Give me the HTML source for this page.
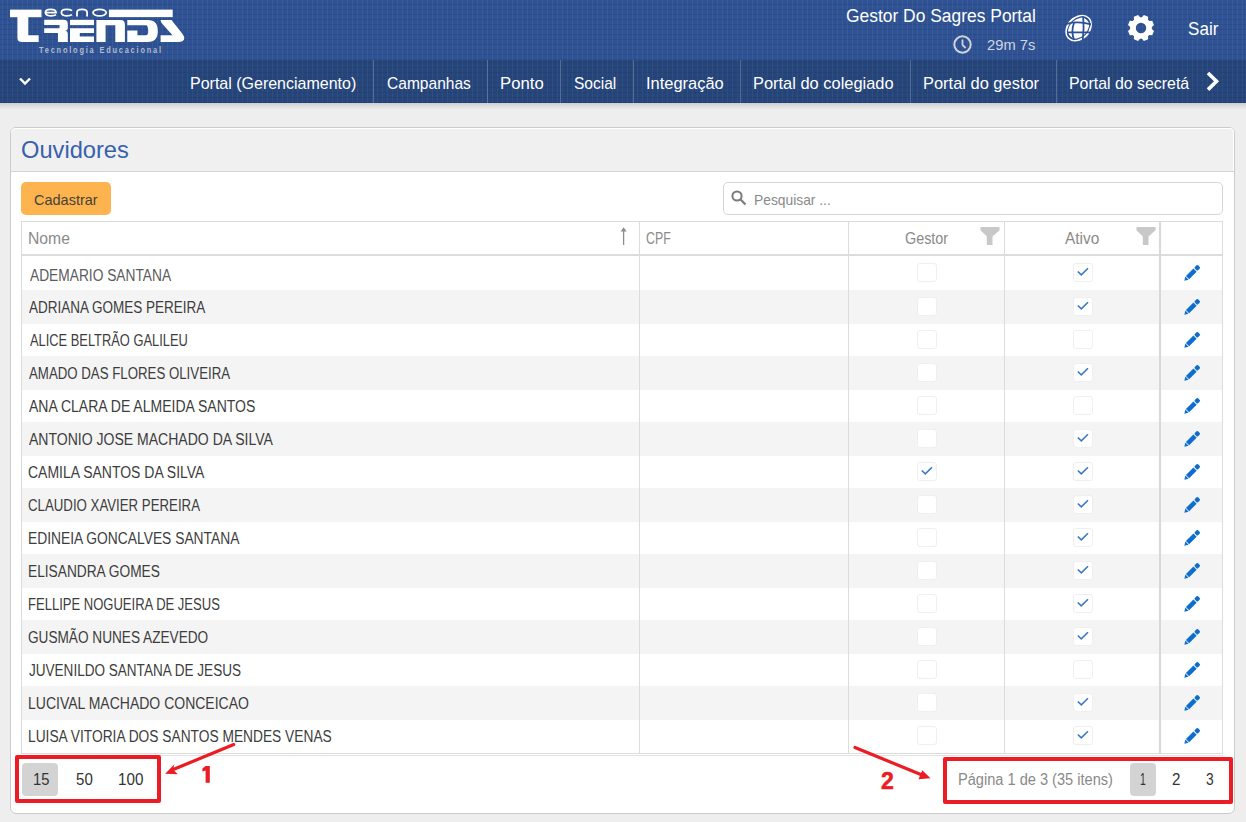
<!DOCTYPE html>
<html><head><meta charset="utf-8"><style>
*{margin:0;padding:0;box-sizing:border-box}
html,body{width:1246px;height:822px;overflow:hidden;background:#eeeeee;font-family:"Liberation Sans",sans-serif}
.t{position:absolute;white-space:nowrap;transform-origin:0 0}
svg{position:absolute;overflow:visible}
</style></head><body>
<div style="position:absolute;left:0px;top:0px;width:1246px;height:60px;background:repeating-linear-gradient(90deg,rgba(0,0,0,0) 0 2px,rgba(255,255,255,.05) 2px 3px,rgba(0,0,0,0) 3px 5px),repeating-linear-gradient(0deg,rgba(0,0,0,.08) 0 1px,rgba(0,0,0,0) 1px 5px),#2e5293"></div>
<div style="position:absolute;left:0px;top:60px;width:1246px;height:43px;background:repeating-linear-gradient(90deg,rgba(0,0,0,0) 0 2px,rgba(255,255,255,.045) 2px 3px,rgba(0,0,0,0) 3px 5px),repeating-linear-gradient(0deg,rgba(0,0,0,.08) 0 1px,rgba(0,0,0,0) 1px 5px),#26467b"></div>
<div style="position:absolute;left:0px;top:103px;width:1246px;height:7px;background:linear-gradient(rgba(0,0,0,0.13),rgba(0,0,0,0))"></div>
<div style="position:absolute;left:373px;top:60px;width:1px;height:43px;background:rgba(255,255,255,0.22)"></div>
<div style="position:absolute;left:487px;top:60px;width:1px;height:43px;background:rgba(255,255,255,0.22)"></div>
<div style="position:absolute;left:560px;top:60px;width:1px;height:43px;background:rgba(255,255,255,0.22)"></div>
<div style="position:absolute;left:633px;top:60px;width:1px;height:43px;background:rgba(255,255,255,0.22)"></div>
<div style="position:absolute;left:740px;top:60px;width:1px;height:43px;background:rgba(255,255,255,0.22)"></div>
<div style="position:absolute;left:910px;top:60px;width:1px;height:43px;background:rgba(255,255,255,0.22)"></div>
<div style="position:absolute;left:1056px;top:60px;width:1px;height:43px;background:rgba(255,255,255,0.22)"></div>
<svg style="left:0;top:0" width="200" height="60" viewBox="0 0 200 60">
<g fill="#fff">
<rect x="10" y="9.6" width="31.5" height="7.6"/>
<path d="M17.4 17 H28.3 V35.3 H38.7 V42.1 H22 Q17.4 42.1 17.4 37.5 Z"/>
<rect x="108.9" y="9.6" width="63.8" height="7.5"/>
<!-- R -->
<path d="M44.2 19.8 H63.5 Q67.8 19.8 67.8 24 V28 Q67.8 30.5 65 30.7 Q67.8 31 67.8 34 V42 H58 V33 H44.2 V28.2 H59.5 V25.1 H44.2 Z"/>
<!-- E -->
<rect x="70" y="19.8" width="24" height="5.3"/>
<path d="M70 28.2 H94 V33 H79.8 V36.4 H94 V42 H70 Z"/>
<!-- N -->
<path d="M96.4 20 H120.5 Q124.9 20 124.9 24.4 V42 H115.3 V25.3 H105.6 V42 H96.4 Z"/>
<!-- D -->
<path d="M127.3 20 H148 Q157.8 20 157.8 31 Q157.8 42 148 42 H127.3 V30.5 H137.4 V35.3 H146 Q148.2 35.3 148.2 31 Q148.2 25.3 146 25.3 H127.3 Z"/>
<!-- S -->
<path d="M160.6 20 H171.5 L181 32 Q184.3 36 184.3 38 Q184.3 42 178 42 H160.6 V35.3 H172.5 L162 23.5 Q160.6 21.5 160.6 20 Z"/>
</g>
<g fill="none" stroke="#fff" stroke-width="1.8">
<path d="M45.5 12.6 H56 Q56 9.4 50.7 9.4 Q45.4 9.4 45.4 12.6 Q45.4 15.8 50.7 15.8 Q54.5 15.8 56 14.8"/>
<path d="M72 10.6 Q70.5 9.4 66.4 9.4 Q61.4 9.4 61.4 12.6 Q61.4 15.8 66.4 15.8 Q70.5 15.8 72 14.6"/>
<path d="M77 16.6 V12.6 Q77 9.4 82 9.4 Q87.1 9.4 87.1 12.6 V16.6"/>
<ellipse cx="99.6" cy="12.6" rx="6.6" ry="3.3"/>
</g>
</svg>
<div class="t" style="left:39.20px;top:45.5px;font-size:9px;line-height:9px;color:#b4bccf;font-weight:bold;transform:scaleX(0.8212);letter-spacing:2.2px;">Tecnologia Educacional</div>
<div class="t" style="left:845.97px;top:7px;font-size:18px;line-height:18px;color:#fff;transform:scaleX(0.9678);">Gestor Do Sagres Portal</div>
<div class="t" style="left:986.76px;top:37px;font-size:15px;line-height:15px;color:#d2d6e0;transform:scaleX(0.9833);">29m 7s</div>
<svg style="left:952px;top:34px" width="21" height="21" viewBox="0 0 21 21"><circle cx="10.5" cy="10.5" r="8.2" fill="none" stroke="#cfd3dc" stroke-width="2"/><path d="M10.5 5.5 V10.8 L13.6 14" fill="none" stroke="#cfd3dc" stroke-width="1.8"/></svg>
<svg style="left:0;top:0" width="1246" height="60">
<circle cx="1078.6" cy="28.1" r="11.6" fill="#fff"/>
<ellipse cx="1078.6" cy="28.1" rx="14.2" ry="10.6" transform="rotate(-45 1078.6 28.1)" fill="none" stroke="#fff" stroke-width="1.6"/>
<g fill="none" stroke="#2b5094">
<path d="M1067 23.8 Q1078 20.8 1091 24.4" stroke-width="1.8"/>
<path d="M1067.5 32.4 H1090.5" stroke-width="1.8"/>
<path d="M1083.2 16.5 Q1084.2 28 1082.8 40" stroke-width="1.8"/>
<path d="M1074 23 Q1070.8 31 1074 40" stroke-width="1.8"/>
<ellipse cx="1078.6" cy="28.1" rx="12.8" ry="9.2" transform="rotate(-45 1078.6 28.1)" stroke-width="1.1"/>
</g>
</svg>
<svg style="left:0;top:0" width="1246" height="60"><path fill="#fff" fill-rule="evenodd" d="M1151.86 27.05 L1153.98 25.12 L1152.22 20.85 L1149.35 20.99 L1148.01 19.65 L1148.15 16.78 L1143.88 15.02 L1141.95 17.14 L1140.05 17.14 L1138.12 15.02 L1133.85 16.78 L1133.99 19.65 L1132.65 20.99 L1129.78 20.85 L1128.02 25.12 L1130.14 27.05 L1130.14 28.95 L1128.02 30.88 L1129.78 35.15 L1132.65 35.01 L1133.99 36.35 L1133.85 39.22 L1138.12 40.98 L1140.05 38.86 L1141.95 38.86 L1143.88 40.98 L1148.15 39.22 L1148.01 36.35 L1149.35 35.01 L1152.22 35.15 L1153.98 30.88 L1151.86 28.95 Z M1146.2 28 A5.2 5.2 0 1 0 1135.8 28 A5.2 5.2 0 1 0 1146.2 28 Z"/></svg>
<div class="t" style="left:1188.29px;top:20px;font-size:18px;line-height:18px;color:#fff;transform:scaleX(0.9484);">Sair</div>
<svg style="left:18px;top:76px" width="14" height="11" viewBox="0 0 14 11"><path d="M2 2.5 L7 7.5 L12 2.5" fill="none" stroke="#fff" stroke-width="2.4"/></svg>
<div class="t" style="left:190.02px;top:75px;font-size:17px;line-height:17px;color:#fff;transform:scaleX(0.9410);">Portal (Gerenciamento)</div>
<div class="t" style="left:386.51px;top:75px;font-size:17px;line-height:17px;color:#fff;transform:scaleX(0.9149);">Campanhas</div>
<div class="t" style="left:500.07px;top:75px;font-size:17px;line-height:17px;color:#fff;transform:scaleX(0.9835);">Ponto</div>
<div class="t" style="left:573.82px;top:75px;font-size:17px;line-height:17px;color:#fff;transform:scaleX(0.9124);">Social</div>
<div class="t" style="left:645.65px;top:75px;font-size:17px;line-height:17px;color:#fff;transform:scaleX(0.9667);">Integração</div>
<div class="t" style="left:752.69px;top:75px;font-size:17px;line-height:17px;color:#fff;transform:scaleX(0.9659);">Portal do colegiado</div>
<div class="t" style="left:923.19px;top:75px;font-size:17px;line-height:17px;color:#fff;transform:scaleX(0.9671);">Portal do gestor</div>
<div class="t" style="left:1068.83px;top:75px;font-size:17px;line-height:17px;color:#fff;transform:scaleX(0.9352);">Portal do secretá</div>
<svg style="left:1204px;top:70px" width="18" height="23" viewBox="0 0 18 23"><path d="M4 3 L12.5 11.3 L4 19.6" fill="none" stroke="#fff" stroke-width="3.6"/></svg>
<div style="position:absolute;left:10px;top:127px;width:1225px;height:687px;background:#fff;border:1px solid #cbcbcb;border-radius:6px"></div>
<div style="position:absolute;left:11px;top:128px;width:1223px;height:44px;background:#f0f0f0;border-radius:5px 5px 0 0;border-bottom:1px solid #d3d3d3;box-shadow:inset 0 1px #fff,inset -1px 0 #fff"></div>
<div class="t" style="left:20.81px;top:138px;font-size:24px;line-height:24px;color:#3761ad;transform:scaleX(0.9856);">Ouvidores</div>
<div style="position:absolute;left:21px;top:182px;width:90px;height:33px;background:#fdb44f;border-radius:5px"></div>
<div class="t" style="left:34.27px;top:192px;font-size:15px;line-height:15px;color:#454238;transform:scaleX(0.9668);">Cadastrar</div>
<div style="position:absolute;left:723px;top:182px;width:500px;height:33px;background:#fff;border:1px solid #d5d5d5;border-radius:5px"></div>
<svg style="left:730px;top:189px" width="18" height="18" viewBox="0 0 18 18"><circle cx="7" cy="7" r="4.6" fill="none" stroke="#7a7a7a" stroke-width="2"/><path d="M10.3 10.3 L15.5 15.5" stroke="#7a7a7a" stroke-width="2.2"/></svg>
<div class="t" style="left:754.08px;top:192px;font-size:15px;line-height:15px;color:#8a8a8a;transform:scaleX(0.9206);">Pesquisar ...</div>
<div style="position:absolute;left:21px;top:221px;width:1202px;height:533px;border:1px solid #dcdcdc;background:#fff"></div>
<div style="position:absolute;left:22px;top:290px;width:1200px;height:34px;background:#f4f4f4"></div>
<div style="position:absolute;left:22px;top:356px;width:1200px;height:34px;background:#f4f4f4"></div>
<div style="position:absolute;left:22px;top:422px;width:1200px;height:34px;background:#f4f4f4"></div>
<div style="position:absolute;left:22px;top:488px;width:1200px;height:34px;background:#f4f4f4"></div>
<div style="position:absolute;left:22px;top:554px;width:1200px;height:34px;background:#f4f4f4"></div>
<div style="position:absolute;left:22px;top:620px;width:1200px;height:34px;background:#f4f4f4"></div>
<div style="position:absolute;left:22px;top:686px;width:1200px;height:34px;background:#f4f4f4"></div>
<div style="position:absolute;left:22px;top:254px;width:1200px;height:2px;background:#dcdcdc"></div>
<div style="position:absolute;left:639px;top:221px;width:1px;height:533px;background:#dcdcdc"></div>
<div style="position:absolute;left:848px;top:221px;width:1px;height:533px;background:#dcdcdc"></div>
<div style="position:absolute;left:1004px;top:221px;width:1px;height:533px;background:#dcdcdc"></div>
<div style="position:absolute;left:1159px;top:221px;width:2px;height:533px;background:#d8d8d8"></div>
<div style="position:absolute;left:21px;top:755px;width:1202px;height:1px;background:#e2e2e2"></div>
<div class="t" style="left:27.77px;top:231px;font-size:16px;line-height:16px;color:#8a8a8a;transform:scaleX(0.9816);">Nome</div>
<div class="t" style="left:646.42px;top:231px;font-size:16px;line-height:16px;color:#8a8a8a;transform:scaleX(0.7740);">CPF</div>
<div class="t" style="left:904.73px;top:231px;font-size:16px;line-height:16px;color:#8a8a8a;transform:scaleX(0.8974);">Gestor</div>
<div class="t" style="left:1065.40px;top:231px;font-size:16px;line-height:16px;color:#8a8a8a;transform:scaleX(0.9629);">Ativo</div>
<svg style="left:619px;top:226px" width="10" height="20" viewBox="0 0 10 20"><path d="M4.6 3 V19" stroke="#8c8c8c" stroke-width="1.3"/><path d="M1.6 5.5 L4.6 1.2 L7.6 5.5 Z" fill="#8c8c8c"/></svg>
<svg style="left:980px;top:227px" width="20" height="18" viewBox="0 0 19 18"><path d="M0 0 H19 V3.3 L12 9.5 V18 H6.3 V9.5 L0 3.3 Z" fill="#c8c8c8"/></svg>
<svg style="left:1136.2px;top:227px" width="20" height="18" viewBox="0 0 19 18"><path d="M0 0 H19 V3.3 L12 9.5 V18 H6.3 V9.5 L0 3.3 Z" fill="#c8c8c8"/></svg>
<div class="t" style="left:29.50px;top:268px;font-size:16px;line-height:16px;color:#5c5c5c;transform:scaleX(0.8597);">ADEMARIO SANTANA</div>
<div style="position:absolute;left:917px;top:263px;width:20px;height:19px;border:1px solid #efefef;border-radius:3px;background:#fff"></div>
<div style="position:absolute;left:1073px;top:263px;width:20px;height:19px;border:1px solid #efefef;border-radius:3px;background:#fff"></div>
<svg style="left:1075.5px;top:265px" width="14" height="14" viewBox="0 0 14 14"><path d="M1.8 6.5 L5.3 9.9 L12 3.2" fill="none" stroke="#3b78c6" stroke-width="1.6"/></svg>
<svg style="left:0;top:0" width="1246" height="822"><g transform="translate(1184.3 280.8) rotate(-45)" fill="#0d6ecd"><path d="M0 0 L3.8 -2.25 V2.25 Z"/><rect x="4.6" y="-2.25" width="10.6" height="4.5"/><rect x="16.1" y="-2.25" width="4.6" height="4.5" rx="1.1"/></g></svg>
<div class="t" style="left:29.00px;top:300px;font-size:16px;line-height:16px;color:#3d3d3d;transform:scaleX(0.8440);">ADRIANA GOMES PEREIRA</div>
<div style="position:absolute;left:917px;top:297px;width:20px;height:19px;border:1px solid #efefef;border-radius:3px;background:#fff"></div>
<div style="position:absolute;left:1073px;top:297px;width:20px;height:19px;border:1px solid #efefef;border-radius:3px;background:#fff"></div>
<svg style="left:1075.5px;top:299px" width="14" height="14" viewBox="0 0 14 14"><path d="M1.8 6.5 L5.3 9.9 L12 3.2" fill="none" stroke="#3b78c6" stroke-width="1.6"/></svg>
<svg style="left:0;top:0" width="1246" height="822"><g transform="translate(1184.3 314.8) rotate(-45)" fill="#0d6ecd"><path d="M0 0 L3.8 -2.25 V2.25 Z"/><rect x="4.6" y="-2.25" width="10.6" height="4.5"/><rect x="16.1" y="-2.25" width="4.6" height="4.5" rx="1.1"/></g></svg>
<div class="t" style="left:30.00px;top:333px;font-size:16px;line-height:16px;color:#3d3d3d;transform:scaleX(0.8041);">ALICE BELTRÃO GALILEU</div>
<div style="position:absolute;left:917px;top:330px;width:20px;height:19px;border:1px solid #efefef;border-radius:3px;background:#fff"></div>
<div style="position:absolute;left:1073px;top:330px;width:20px;height:19px;border:1px solid #efefef;border-radius:3px;background:#fff"></div>
<svg style="left:0;top:0" width="1246" height="822"><g transform="translate(1184.3 347.8) rotate(-45)" fill="#0d6ecd"><path d="M0 0 L3.8 -2.25 V2.25 Z"/><rect x="4.6" y="-2.25" width="10.6" height="4.5"/><rect x="16.1" y="-2.25" width="4.6" height="4.5" rx="1.1"/></g></svg>
<div class="t" style="left:28.50px;top:366px;font-size:16px;line-height:16px;color:#3d3d3d;transform:scaleX(0.8284);">AMADO DAS FLORES OLIVEIRA</div>
<div style="position:absolute;left:917px;top:363px;width:20px;height:19px;border:1px solid #efefef;border-radius:3px;background:#fff"></div>
<div style="position:absolute;left:1073px;top:363px;width:20px;height:19px;border:1px solid #efefef;border-radius:3px;background:#fff"></div>
<svg style="left:1075.5px;top:365px" width="14" height="14" viewBox="0 0 14 14"><path d="M1.8 6.5 L5.3 9.9 L12 3.2" fill="none" stroke="#3b78c6" stroke-width="1.6"/></svg>
<svg style="left:0;top:0" width="1246" height="822"><g transform="translate(1184.3 380.8) rotate(-45)" fill="#0d6ecd"><path d="M0 0 L3.8 -2.25 V2.25 Z"/><rect x="4.6" y="-2.25" width="10.6" height="4.5"/><rect x="16.1" y="-2.25" width="4.6" height="4.5" rx="1.1"/></g></svg>
<div class="t" style="left:29.00px;top:399px;font-size:16px;line-height:16px;color:#3d3d3d;transform:scaleX(0.8757);">ANA CLARA DE ALMEIDA SANTOS</div>
<div style="position:absolute;left:917px;top:396px;width:20px;height:19px;border:1px solid #efefef;border-radius:3px;background:#fff"></div>
<div style="position:absolute;left:1073px;top:396px;width:20px;height:19px;border:1px solid #efefef;border-radius:3px;background:#fff"></div>
<svg style="left:0;top:0" width="1246" height="822"><g transform="translate(1184.3 413.8) rotate(-45)" fill="#0d6ecd"><path d="M0 0 L3.8 -2.25 V2.25 Z"/><rect x="4.6" y="-2.25" width="10.6" height="4.5"/><rect x="16.1" y="-2.25" width="4.6" height="4.5" rx="1.1"/></g></svg>
<div class="t" style="left:29.00px;top:432px;font-size:16px;line-height:16px;color:#3d3d3d;transform:scaleX(0.8765);">ANTONIO JOSE MACHADO DA SILVA</div>
<div style="position:absolute;left:917px;top:429px;width:20px;height:19px;border:1px solid #efefef;border-radius:3px;background:#fff"></div>
<div style="position:absolute;left:1073px;top:429px;width:20px;height:19px;border:1px solid #efefef;border-radius:3px;background:#fff"></div>
<svg style="left:1075.5px;top:431px" width="14" height="14" viewBox="0 0 14 14"><path d="M1.8 6.5 L5.3 9.9 L12 3.2" fill="none" stroke="#3b78c6" stroke-width="1.6"/></svg>
<svg style="left:0;top:0" width="1246" height="822"><g transform="translate(1184.3 446.8) rotate(-45)" fill="#0d6ecd"><path d="M0 0 L3.8 -2.25 V2.25 Z"/><rect x="4.6" y="-2.25" width="10.6" height="4.5"/><rect x="16.1" y="-2.25" width="4.6" height="4.5" rx="1.1"/></g></svg>
<div class="t" style="left:28.34px;top:465px;font-size:16px;line-height:16px;color:#3d3d3d;transform:scaleX(0.8740);">CAMILA SANTOS DA SILVA</div>
<div style="position:absolute;left:917px;top:462px;width:20px;height:19px;border:1px solid #efefef;border-radius:3px;background:#fff"></div>
<svg style="left:919.5px;top:464px" width="14" height="14" viewBox="0 0 14 14"><path d="M1.8 6.5 L5.3 9.9 L12 3.2" fill="none" stroke="#3b78c6" stroke-width="1.6"/></svg>
<div style="position:absolute;left:1073px;top:462px;width:20px;height:19px;border:1px solid #efefef;border-radius:3px;background:#fff"></div>
<svg style="left:1075.5px;top:464px" width="14" height="14" viewBox="0 0 14 14"><path d="M1.8 6.5 L5.3 9.9 L12 3.2" fill="none" stroke="#3b78c6" stroke-width="1.6"/></svg>
<svg style="left:0;top:0" width="1246" height="822"><g transform="translate(1184.3 479.8) rotate(-45)" fill="#0d6ecd"><path d="M0 0 L3.8 -2.25 V2.25 Z"/><rect x="4.6" y="-2.25" width="10.6" height="4.5"/><rect x="16.1" y="-2.25" width="4.6" height="4.5" rx="1.1"/></g></svg>
<div class="t" style="left:28.38px;top:498px;font-size:16px;line-height:16px;color:#3d3d3d;transform:scaleX(0.8280);">CLAUDIO XAVIER PEREIRA</div>
<div style="position:absolute;left:917px;top:495px;width:20px;height:19px;border:1px solid #efefef;border-radius:3px;background:#fff"></div>
<div style="position:absolute;left:1073px;top:495px;width:20px;height:19px;border:1px solid #efefef;border-radius:3px;background:#fff"></div>
<svg style="left:1075.5px;top:497px" width="14" height="14" viewBox="0 0 14 14"><path d="M1.8 6.5 L5.3 9.9 L12 3.2" fill="none" stroke="#3b78c6" stroke-width="1.6"/></svg>
<svg style="left:0;top:0" width="1246" height="822"><g transform="translate(1184.3 512.8) rotate(-45)" fill="#0d6ecd"><path d="M0 0 L3.8 -2.25 V2.25 Z"/><rect x="4.6" y="-2.25" width="10.6" height="4.5"/><rect x="16.1" y="-2.25" width="4.6" height="4.5" rx="1.1"/></g></svg>
<div class="t" style="left:27.92px;top:531px;font-size:16px;line-height:16px;color:#3d3d3d;transform:scaleX(0.8636);">EDINEIA GONCALVES SANTANA</div>
<div style="position:absolute;left:917px;top:528px;width:20px;height:19px;border:1px solid #efefef;border-radius:3px;background:#fff"></div>
<div style="position:absolute;left:1073px;top:528px;width:20px;height:19px;border:1px solid #efefef;border-radius:3px;background:#fff"></div>
<svg style="left:1075.5px;top:530px" width="14" height="14" viewBox="0 0 14 14"><path d="M1.8 6.5 L5.3 9.9 L12 3.2" fill="none" stroke="#3b78c6" stroke-width="1.6"/></svg>
<svg style="left:0;top:0" width="1246" height="822"><g transform="translate(1184.3 545.8) rotate(-45)" fill="#0d6ecd"><path d="M0 0 L3.8 -2.25 V2.25 Z"/><rect x="4.6" y="-2.25" width="10.6" height="4.5"/><rect x="16.1" y="-2.25" width="4.6" height="4.5" rx="1.1"/></g></svg>
<div class="t" style="left:27.93px;top:564px;font-size:16px;line-height:16px;color:#3d3d3d;transform:scaleX(0.8572);">ELISANDRA GOMES</div>
<div style="position:absolute;left:917px;top:561px;width:20px;height:19px;border:1px solid #efefef;border-radius:3px;background:#fff"></div>
<div style="position:absolute;left:1073px;top:561px;width:20px;height:19px;border:1px solid #efefef;border-radius:3px;background:#fff"></div>
<svg style="left:1075.5px;top:563px" width="14" height="14" viewBox="0 0 14 14"><path d="M1.8 6.5 L5.3 9.9 L12 3.2" fill="none" stroke="#3b78c6" stroke-width="1.6"/></svg>
<svg style="left:0;top:0" width="1246" height="822"><g transform="translate(1184.3 578.8) rotate(-45)" fill="#0d6ecd"><path d="M0 0 L3.8 -2.25 V2.25 Z"/><rect x="4.6" y="-2.25" width="10.6" height="4.5"/><rect x="16.1" y="-2.25" width="4.6" height="4.5" rx="1.1"/></g></svg>
<div class="t" style="left:27.98px;top:597px;font-size:16px;line-height:16px;color:#3d3d3d;transform:scaleX(0.8141);">FELLIPE NOGUEIRA DE JESUS</div>
<div style="position:absolute;left:917px;top:594px;width:20px;height:19px;border:1px solid #efefef;border-radius:3px;background:#fff"></div>
<div style="position:absolute;left:1073px;top:594px;width:20px;height:19px;border:1px solid #efefef;border-radius:3px;background:#fff"></div>
<svg style="left:1075.5px;top:596px" width="14" height="14" viewBox="0 0 14 14"><path d="M1.8 6.5 L5.3 9.9 L12 3.2" fill="none" stroke="#3b78c6" stroke-width="1.6"/></svg>
<svg style="left:0;top:0" width="1246" height="822"><g transform="translate(1184.3 611.8) rotate(-45)" fill="#0d6ecd"><path d="M0 0 L3.8 -2.25 V2.25 Z"/><rect x="4.6" y="-2.25" width="10.6" height="4.5"/><rect x="16.1" y="-2.25" width="4.6" height="4.5" rx="1.1"/></g></svg>
<div class="t" style="left:28.36px;top:630px;font-size:16px;line-height:16px;color:#3d3d3d;transform:scaleX(0.8514);">GUSMÃO NUNES AZEVEDO</div>
<div style="position:absolute;left:917px;top:627px;width:20px;height:19px;border:1px solid #efefef;border-radius:3px;background:#fff"></div>
<div style="position:absolute;left:1073px;top:627px;width:20px;height:19px;border:1px solid #efefef;border-radius:3px;background:#fff"></div>
<svg style="left:1075.5px;top:629px" width="14" height="14" viewBox="0 0 14 14"><path d="M1.8 6.5 L5.3 9.9 L12 3.2" fill="none" stroke="#3b78c6" stroke-width="1.6"/></svg>
<svg style="left:0;top:0" width="1246" height="822"><g transform="translate(1184.3 644.8) rotate(-45)" fill="#0d6ecd"><path d="M0 0 L3.8 -2.25 V2.25 Z"/><rect x="4.6" y="-2.25" width="10.6" height="4.5"/><rect x="16.1" y="-2.25" width="4.6" height="4.5" rx="1.1"/></g></svg>
<div class="t" style="left:28.79px;top:663px;font-size:16px;line-height:16px;color:#3d3d3d;transform:scaleX(0.8465);">JUVENILDO SANTANA DE JESUS</div>
<div style="position:absolute;left:917px;top:660px;width:20px;height:19px;border:1px solid #efefef;border-radius:3px;background:#fff"></div>
<div style="position:absolute;left:1073px;top:660px;width:20px;height:19px;border:1px solid #efefef;border-radius:3px;background:#fff"></div>
<svg style="left:0;top:0" width="1246" height="822"><g transform="translate(1184.3 677.8) rotate(-45)" fill="#0d6ecd"><path d="M0 0 L3.8 -2.25 V2.25 Z"/><rect x="4.6" y="-2.25" width="10.6" height="4.5"/><rect x="16.1" y="-2.25" width="4.6" height="4.5" rx="1.1"/></g></svg>
<div class="t" style="left:27.91px;top:696px;font-size:16px;line-height:16px;color:#3d3d3d;transform:scaleX(0.8750);">LUCIVAL MACHADO CONCEICAO</div>
<div style="position:absolute;left:917px;top:693px;width:20px;height:19px;border:1px solid #efefef;border-radius:3px;background:#fff"></div>
<div style="position:absolute;left:1073px;top:693px;width:20px;height:19px;border:1px solid #efefef;border-radius:3px;background:#fff"></div>
<svg style="left:1075.5px;top:695px" width="14" height="14" viewBox="0 0 14 14"><path d="M1.8 6.5 L5.3 9.9 L12 3.2" fill="none" stroke="#3b78c6" stroke-width="1.6"/></svg>
<svg style="left:0;top:0" width="1246" height="822"><g transform="translate(1184.3 710.8) rotate(-45)" fill="#0d6ecd"><path d="M0 0 L3.8 -2.25 V2.25 Z"/><rect x="4.6" y="-2.25" width="10.6" height="4.5"/><rect x="16.1" y="-2.25" width="4.6" height="4.5" rx="1.1"/></g></svg>
<div class="t" style="left:27.93px;top:729px;font-size:16px;line-height:16px;color:#3d3d3d;transform:scaleX(0.8598);">LUISA VITORIA DOS SANTOS MENDES VENAS</div>
<div style="position:absolute;left:917px;top:726px;width:20px;height:19px;border:1px solid #efefef;border-radius:3px;background:#fff"></div>
<div style="position:absolute;left:1073px;top:726px;width:20px;height:19px;border:1px solid #efefef;border-radius:3px;background:#fff"></div>
<svg style="left:1075.5px;top:728px" width="14" height="14" viewBox="0 0 14 14"><path d="M1.8 6.5 L5.3 9.9 L12 3.2" fill="none" stroke="#3b78c6" stroke-width="1.6"/></svg>
<svg style="left:0;top:0" width="1246" height="822"><g transform="translate(1184.3 743.8) rotate(-45)" fill="#0d6ecd"><path d="M0 0 L3.8 -2.25 V2.25 Z"/><rect x="4.6" y="-2.25" width="10.6" height="4.5"/><rect x="16.1" y="-2.25" width="4.6" height="4.5" rx="1.1"/></g></svg>
<div style="position:absolute;left:22px;top:763px;width:36px;height:33px;background:#d3d3d3;border-radius:4px"></div>
<div class="t" style="left:33.08px;top:772px;font-size:16px;line-height:16px;color:#333;transform:scaleX(0.9231);">15</div>
<div class="t" style="left:75.53px;top:772px;font-size:16px;line-height:16px;color:#333;transform:scaleX(0.9412);">50</div>
<div class="t" style="left:117.55px;top:772px;font-size:16px;line-height:16px;color:#333;transform:scaleX(0.9505);">100</div>
<div class="t" style="left:957.86px;top:772px;font-size:16px;line-height:16px;color:#8a8a8a;transform:scaleX(0.9121);">Página 1 de 3 (35 itens)</div>
<div style="position:absolute;left:1130px;top:763px;width:26px;height:33px;background:#d3d3d3;border-radius:4px"></div>
<div class="t" style="left:1139.85px;top:772px;font-size:16px;line-height:16px;color:#333;transform:scaleX(0.6483);">1</div>
<div class="t" style="left:1171.99px;top:772px;font-size:16px;line-height:16px;color:#333;transform:scaleX(0.9467);">2</div>
<div class="t" style="left:1205.57px;top:772px;font-size:16px;line-height:16px;color:#333;transform:scaleX(0.8645);">3</div>
<div style="position:absolute;left:15px;top:755px;width:146px;height:48px;border:4px solid #ec1c24;border-radius:2px"></div>
<div style="position:absolute;left:943px;top:757px;width:290px;height:47px;border:4px solid #ec1c24;border-radius:2px"></div>
<svg style="left:0;top:0" width="1246" height="822">
<path d="M233.7 744.6 L172 770" stroke="#ec1c24" stroke-width="3.2" stroke-linecap="round"/>
<path d="M165.2 773.8 L174.2 764.6 L173.2 769.8 L177.8 774.2 Z" fill="#ec1c24"/>
<path d="M205.6 766 H209.8 V782.8 H205.6 V770.6 L202.4 771.6 V768.6 Z" fill="#ec1c24"/>
<path d="M855 747.5 L922 775" stroke="#ec1c24" stroke-width="3.2" stroke-linecap="round"/>
<path d="M930.5 778.3 L918.5 779.3 L922.3 770.2 Z" fill="#ec1c24"/>
</svg>
<div class="t" style="left:881.15px;top:770px;font-size:23px;line-height:23px;color:#ec1c24;font-weight:bold;transform:scaleX(1.0044);-webkit-text-stroke:0.5px #ec1c24;">2</div>
</body></html>
